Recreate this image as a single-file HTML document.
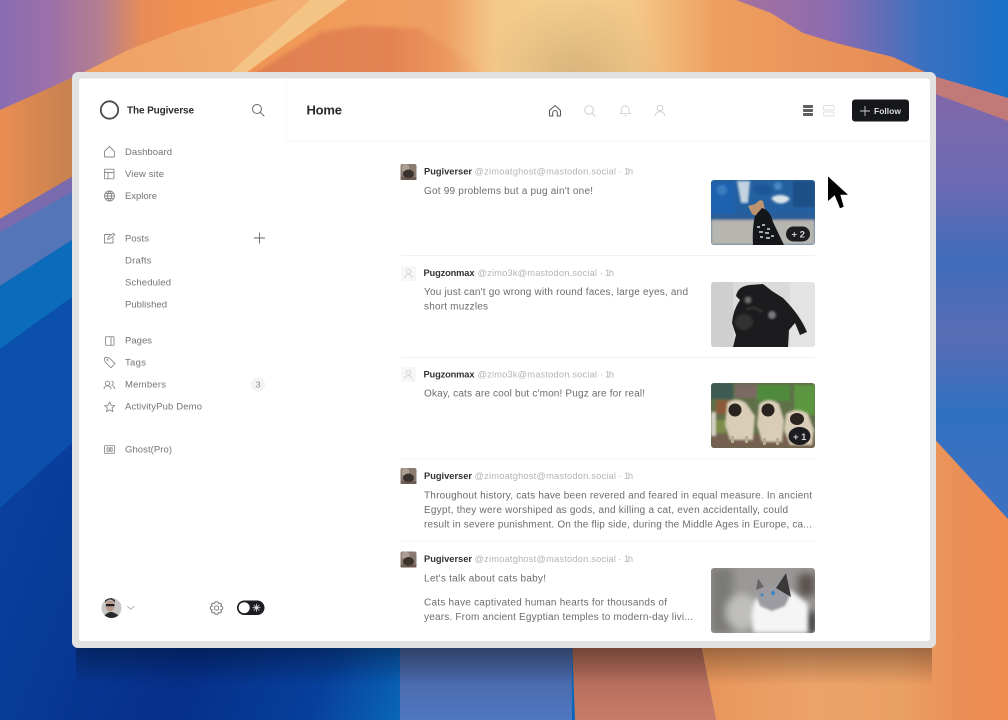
<!DOCTYPE html>
<html lang="en"><head><meta charset="utf-8"><title>The Pugiverse</title>
<style>
html,body{margin:0;padding:0;width:1008px;height:720px;overflow:hidden;background:#0a3a9a}
svg{display:block;overflow:hidden}
text{font-family:"Liberation Sans",sans-serif}
.s{font-size:9.5px;fill:#747474}
.n{font-size:9.3px;font-weight:700;fill:#303236}
.h{font-size:9.3px;fill:#b4b4b4}
.c{font-size:10px;fill:#6c6c6c}
.i{fill:none;stroke:#8a8a8a;stroke-width:.9;stroke-linecap:round;stroke-linejoin:round}
.d{stroke:#f1f1f1;stroke-width:1}
</style></head><body>
<svg width="1008" height="720" viewBox="0 0 1008 720" xmlns="http://www.w3.org/2000/svg">
<defs>
<linearGradient id="top" x1="0" x2="1008" y1="0" y2="0" gradientUnits="userSpaceOnUse">
<stop offset="0" stop-color="#8a6cb2"/><stop offset=".05" stop-color="#9c70a8"/><stop offset=".1" stop-color="#b57f90"/><stop offset=".14" stop-color="#e68c58"/><stop offset=".18" stop-color="#f09050"/><stop offset=".3" stop-color="#f09a58"/><stop offset=".44" stop-color="#ef9f64"/><stop offset=".49" stop-color="#f4c888"/><stop offset=".56" stop-color="#f5d08f"/><stop offset=".63" stop-color="#f4c888"/><stop offset=".71" stop-color="#ee9f5f"/><stop offset="1" stop-color="#e08050"/>
</linearGradient>
<linearGradient id="peach" x1="84" x2="320" y1="72" y2="0" gradientUnits="userSpaceOnUse"><stop offset="0" stop-color="#ef9f62"/><stop offset="1" stop-color="#f4b274"/></linearGradient>
<linearGradient id="deep" x1="247" x2="490" y1="0" y2="0" gradientUnits="userSpaceOnUse"><stop offset="0" stop-color="#dc7c50" stop-opacity=".9"/><stop offset=".6" stop-color="#e07e50" stop-opacity=".8"/><stop offset="1" stop-color="#ea8f55" stop-opacity="0"/></linearGradient>
<radialGradient id="midglow" cx="575" cy="80" r="90" gradientUnits="userSpaceOnUse"><stop offset="0" stop-color="#d2ad78" stop-opacity=".85"/><stop offset="1" stop-color="#d2ad78" stop-opacity="0"/></radialGradient>
<linearGradient id="rsky" x1="740" x2="1008" y1="0" y2="0" gradientUnits="userSpaceOnUse"><stop offset="0" stop-color="#a5709e"/><stop offset=".35" stop-color="#8c6cb0"/><stop offset=".68" stop-color="#3c70c0"/><stop offset="1" stop-color="#1870c8"/></linearGradient>
<linearGradient id="rmid" x1="0" x2="0" y1="90" y2="470" gradientUnits="userSpaceOnUse"><stop offset="0" stop-color="#8068a8"/><stop offset=".25" stop-color="#6c6ab4"/><stop offset=".45" stop-color="#3f6cba"/><stop offset=".65" stop-color="#5a6cb6"/><stop offset=".85" stop-color="#2f70c0"/><stop offset="1" stop-color="#3c70c0"/></linearGradient>
<linearGradient id="lor" x1="0" x2="72" y1="0" y2="0" gradientUnits="userSpaceOnUse"><stop offset="0" stop-color="#e98d52"/><stop offset="1" stop-color="#c6814f"/></linearGradient>
<linearGradient id="navy" x1="0" x2="400" y1="560" y2="720" gradientUnits="userSpaceOnUse"><stop offset="0" stop-color="#0a3f9e"/><stop offset=".5" stop-color="#052f88"/><stop offset=".8" stop-color="#073f9c"/><stop offset="1" stop-color="#0a66b8"/></linearGradient>
<linearGradient id="b1" x1="0" x2="0" y1="647" y2="720" gradientUnits="userSpaceOnUse"><stop offset="0" stop-color="#46609c"/><stop offset="1" stop-color="#4f78c2"/></linearGradient>
<linearGradient id="b2" x1="0" x2="0" y1="647" y2="720" gradientUnits="userSpaceOnUse"><stop offset="0" stop-color="#a86452"/><stop offset="1" stop-color="#c87a68"/></linearGradient>
<linearGradient id="or" x1="700" x2="1008" y1="0" y2="0" gradientUnits="userSpaceOnUse"><stop offset="0" stop-color="#e8955a"/><stop offset=".35" stop-color="#eda268"/><stop offset=".65" stop-color="#eba064"/><stop offset=".85" stop-color="#e98e55"/><stop offset="1" stop-color="#f08c52"/></linearGradient>
<linearGradient id="shade" x1="0" x2="0" y1="648" y2="685" gradientUnits="userSpaceOnUse"><stop offset="0" stop-color="#000" stop-opacity=".32"/><stop offset="1" stop-color="#000" stop-opacity="0"/></linearGradient>
<filter id="bl1" x="-20%" y="-20%" width="140%" height="140%"><feGaussianBlur stdDeviation="1"/></filter>
<filter id="bl2" x="-20%" y="-20%" width="140%" height="140%"><feGaussianBlur stdDeviation="2"/></filter>
<filter id="bl3" x="-30%" y="-30%" width="160%" height="160%"><feGaussianBlur stdDeviation="4"/></filter>
<clipPath id="p1"><rect x="711" y="180" width="104" height="65" rx="3"/></clipPath>
<clipPath id="p2"><rect x="711" y="282" width="104" height="65" rx="3"/></clipPath>
<clipPath id="p3"><rect x="711" y="383" width="104" height="65" rx="3"/></clipPath>
<clipPath id="p4"><rect x="711" y="568" width="104" height="65" rx="3"/></clipPath>
<clipPath id="me"><circle cx="111.5" cy="608" r="10"/></clipPath>
<clipPath id="tp"><rect width="1008" height="72"/></clipPath>
<g id="av"><rect width="16" height="16" rx="2" fill="#8a7a72"/><circle cx="5" cy="4" r="4" fill="#b5a79c" opacity=".8"/><ellipse cx="8" cy="10" rx="5.500" ry="4.500" fill="#3a322e"/><rect y="13" width="16" height="3" fill="#5a4640" opacity=".6"/></g>
<g id="ph"><rect width="15" height="15" rx="1" fill="#f7f7f7"/><circle cx="7.5" cy="5.5" r="2.3" fill="none" stroke="#d0d0d0" stroke-width=".8"/><path d="M3.6 12.2c.4-2.4 2-3.6 3.9-3.6s3.5 1.2 3.9 3.6" fill="none" stroke="#d0d0d0" stroke-width=".8"/></g>
</defs>

<!-- wallpaper -->
<rect width="1008" height="720" fill="url(#navy)"/>
<rect width="1008" height="110" fill="url(#top)"/>
<path d="M0 110L26 100 84 72 128 50 180 30 276 0H347L247 72 240 110H0Z" fill="url(#peach)"/>
<path d="M310 0H347L247 72H231Z" fill="#f4c485"/>
<g clip-path="url(#tp)"><path d="M250 76L321 32 360 26 420 28 490 76Z" fill="url(#deep)" filter="url(#bl2)"/></g>
<rect x="480" y="0" width="190" height="72" fill="url(#midglow)"/>
<path d="M736 0L771 13 803 33 836 43 893 57 936 77 1008 98V0Z" fill="url(#rsky)"/>
<!-- left bands -->
<path d="M0 110L72 78V177L0 219Z" fill="url(#lor)"/>
<path d="M0 219L72 177V240L0 286Z" fill="#5475b8"/>
<path d="M0 219L72 177V192L0 232Z" fill="#7a6bae"/>
<path d="M0 286L72 240V297L0 349Z" fill="#0b6cbc"/>
<path d="M0 349L72 297V443L0 508Z" fill="#0a50ac"/>
<!-- right bands -->
<path d="M930 75L1008 98V540H930Z" fill="url(#rmid)"/>
<path d="M930 75L1008 98V121L930 92Z" fill="#c27a78"/>
<!-- bottom bands -->
<rect x="400" y="640" width="172" height="80" fill="url(#b1)"/>
<path d="M572 640H700L716 720H575Z" fill="url(#b2)"/>
<path d="M700 640H930V434L1008 519V720H716Z" fill="url(#or)"/>
<rect x="76" y="648" width="856" height="37" fill="url(#shade)"/>

<g style="filter:blur(.35px)">
<!-- window -->
<rect x="72" y="72" width="864" height="576" rx="6" fill="#e2e2e2"/>
<rect x="79" y="78.5" width="851" height="562.5" rx="3" fill="#fff"/>
<path d="M286 79V141" stroke="#f8f8f8" fill="none"/>
<path d="M286 141H930" stroke="#f3f3f3" fill="none"/>

<!-- sidebar head -->
<circle cx="109.500" cy="110" r="8.700" fill="none" stroke="#4a4a4a" stroke-width="1.800"/>
<text x="127" y="113.700" textLength="67" lengthAdjust="spacing" style="font-size:10px;font-weight:700;fill:#2a2c2f">The Pugiverse</text>
<circle cx="257" cy="109" r="4.500" fill="none" stroke="#666" stroke-width="1"/><path d="M260.300 112.300L264 116" stroke="#666" stroke-width="1" stroke-linecap="round"/>

<!-- nav icons -->
<path class="i" d="M104.500 151.500L109.500 146.500 114.500 151.500V156.500A.6.6 0 0 1 114 157H105A.6.6 0 0 1 104.500 156.500Z"/>
<path class="i" d="M104.500 170A.8.8 0 0 1 105.300 169.200H113.200A.8.8 0 0 1 114 170V178A.8.8 0 0 1 113.200 178.800H105.300A.8.8 0 0 1 104.500 178ZM104.500 172.500H114M108 172.500V178.800"/>
<circle class="i" cx="109.500" cy="196" r="5"/><path class="i" d="M104.500 196H114.500M105.300 193.500H113.700M105.300 198.500H113.700M109.500 191C106.800 193.500 106.800 198.500 109.500 201C112.200 198.500 112.200 193.500 109.500 191Z"/>
<path class="i" d="M110 234.500H104.500V243H113V237.500M107.700 239.500L108.300 237 113.500 233.200 114.800 234.800 109.800 238.800Z"/>
<path d="M254 238H265M259.500 232.500V243.500" stroke="#666" stroke-width=".9" fill="none"/>
<path class="i" d="M105.500 337.500A.8.8 0 0 1 106.300 336.700H113.200A.8.8 0 0 1 114 337.500V344.500A.8.8 0 0 1 113.200 345.300H106.300A.8.8 0 0 1 105.500 344.500ZM111 336.700V345.300"/>
<path class="i" d="M104.500 358.500A1 1 0 0 1 105.500 357.500L109.200 357.800 115 363.500 111 367.800 105 361.800ZM107 360A.5.5 0 1 0 107 359.900"/>
<circle class="i" cx="107.500" cy="383.300" r="2.200"/><path class="i" d="M104 388.800C104.300 386.800 105.700 385.800 107.500 385.800S110.700 386.800 111 388.800M111.800 381.300A2.100 2.100 0 0 1 111.800 385.300M113 386.200C114 386.700 114.600 387.600 114.800 388.800"/>
<path class="i" d="M109.700 401.800L111.200 405.200 114.800 405.600 112.100 408 112.900 411.700 109.700 409.800 106.500 411.700 107.300 408 104.600 405.600 108.200 405.200Z"/>
<path class="i" d="M104.500 446.500A.8.8 0 0 1 105.300 445.700H113.800A.8.8 0 0 1 114.600 446.500V452.500A.8.8 0 0 1 113.800 453.300H105.300A.8.8 0 0 1 104.500 452.500ZM107 447.800H109.200V451.200H107ZM110.200 447.800H112.200V451.200H110.200Z"/>

<!-- nav labels -->
<text class="s" x="125" y="155" textLength="47" lengthAdjust="spacing">Dashboard</text>
<text class="s" x="125" y="177" textLength="39" lengthAdjust="spacing">View site</text>
<text class="s" x="125" y="199" textLength="32" lengthAdjust="spacing">Explore</text>
<text class="s" x="125" y="241.500" textLength="24" lengthAdjust="spacing">Posts</text>
<text class="s" x="125" y="263.500" textLength="26.500" lengthAdjust="spacing">Drafts</text>
<text class="s" x="125" y="285.500" textLength="46" lengthAdjust="spacing">Scheduled</text>
<text class="s" x="125" y="307.500" textLength="42" lengthAdjust="spacing">Published</text>
<text class="s" x="125" y="343.500" textLength="27" lengthAdjust="spacing">Pages</text>
<text class="s" x="125" y="365.500" textLength="21" lengthAdjust="spacing">Tags</text>
<text class="s" x="125" y="387.500" textLength="41" lengthAdjust="spacing">Members</text>
<text class="s" x="125" y="409.500" textLength="77" lengthAdjust="spacing">ActivityPub Demo</text>
<text class="s" x="125" y="452.500" textLength="47" lengthAdjust="spacing">Ghost(Pro)</text>
<circle cx="258" cy="384.500" r="7" fill="#f3f3f3"/><text x="255.800" y="387.500" style="font-size:8.500px;fill:#8a8a8a">3</text>

<!-- sidebar foot -->
<circle cx="111.500" cy="608" r="10" fill="#c9c7c5"/>
<g clip-path="url(#me)"><ellipse cx="110" cy="606" rx="4.500" ry="5.500" fill="#b89a8c"/><path d="M105 603Q110 596 115 603V600L110 597 105 600Z" fill="#403a38"/><rect x="106" y="604" width="8.500" height="2.200" fill="#1f1f1f"/><path d="M102 618Q108 611 112 612T122 618Z" fill="#2a2a2a"/></g>
<path class="i" d="M127.500 606.300L130.700 609.300 134 606.300" style="stroke:#aaa"/>
<g fill="none" stroke="#6e6e6e" stroke-width=".9" stroke-linejoin="round"><circle cx="216.500" cy="608" r="2.200"/><path d="M215.200 601.800H217.800L218.300 603.500 220 602.900 221.600 604.500 220.700 606.100 222.700 607V609L220.700 609.900 221.600 611.500 220 613.100 218.300 612.500 217.800 614.200H215.200L214.700 612.500 213 613.100 211.400 611.500 212.300 609.900 210.300 609V607L212.300 606.100 211.400 604.500 213 602.900 214.700 603.500Z"/></g>
<rect x="237" y="600.500" width="27.500" height="14.500" rx="7.250" fill="#1b1d20"/>
<circle cx="244.200" cy="607.700" r="5.500" fill="#fff"/>
<path d="M256.500 603.700V611.700M252.500 607.700H260.500M253.700 604.900L259.300 610.500M259.300 604.900L253.700 610.500" stroke="#ddd" stroke-width=".8"/><circle cx="256.500" cy="607.700" r="1.500" fill="#ddd"/>

<!-- header -->
<text x="306.500" y="114.500" textLength="35.500" lengthAdjust="spacing" style="font-size:13px;font-weight:700;fill:#2a2a2a">Home</text>
<path d="M549.500 110.500L555 105.500 560.500 110.500V115.200A.8.8 0 0 1 559.700 116H557.300V112.800A2.300 2.300 0 0 0 552.700 112.800V116H550.300A.8.8 0 0 1 549.500 115.200Z" fill="none" stroke="#555" stroke-width="1"/>
<circle cx="589" cy="110" r="4.300" fill="none" stroke="#cfcfcf" stroke-width="1"/><path d="M592.200 113.200L595.500 116.500" stroke="#cfcfcf"/>
<path d="M620.500 113.500C621.500 112.500 621.500 111.500 621.500 109.500A3.700 3.700 0 0 1 628.900 109.500C628.900 111.500 628.900 112.500 630 113.500ZM623.800 115.300Q625.200 116.800 626.700 115.300M625.200 105.800V104.800" fill="none" stroke="#d4d4d4" stroke-width="1"/>
<circle cx="660" cy="108" r="2.800" fill="none" stroke="#cfcfcf"/><path d="M655 116C655.500 113 657.500 111.600 660 111.600S664.500 113 665 116" fill="none" stroke="#cfcfcf"/>
<g fill="#606060"><rect x="803" y="105" width="10" height="3" rx=".7"/><rect x="803" y="109" width="10" height="3" rx=".7"/><rect x="803" y="113" width="10" height="3" rx=".7"/></g>
<g fill="none" stroke="#e2e2e2" stroke-width=".9"><rect x="823.500" y="105.500" width="10.500" height="4.500" rx=".8"/><rect x="823.500" y="112" width="10.500" height="4" rx=".8"/></g>
<rect x="852" y="99.500" width="57" height="22" rx="3" fill="#15171a"/>
<path d="M860 111H870M865 106V116" stroke="#ccc" stroke-width=".9"/>
<text x="874" y="114" textLength="27" lengthAdjust="spacing" style="font-size:8.500px;font-weight:700;fill:#dcdcdc">Follow</text>

<!-- feed -->
<use href="#av" x="400.500" y="164"/>
<text class="n" x="424" y="174.300" textLength="48" lengthAdjust="spacing">Pugiverser</text>
<text class="h" x="474.500" y="174.300" textLength="141.500" lengthAdjust="spacing">@zimoatghost@mastodon.social</text>
<text class="h" x="618" y="174.300">·</text><text class="h" x="624" y="174.300" textLength="9" lengthAdjust="spacing">1h</text>
<text class="c" x="424" y="194" textLength="169" lengthAdjust="spacing">Got 99 problems but a pug ain't one!</text>
<path class="d" d="M401 255.500H815"/>

<use href="#ph" x="401" y="266"/>
<text class="n" x="423.500" y="276" textLength="51" lengthAdjust="spacing">Pugzonmax</text>
<text class="h" x="477.500" y="276" textLength="119.500" lengthAdjust="spacing">@zimo3k@mastodon.social</text>
<text class="h" x="600" y="276">·</text><text class="h" x="605" y="276" textLength="9" lengthAdjust="spacing">1h</text>
<text class="c" x="424" y="295.200" textLength="264" lengthAdjust="spacing">You just can't go wrong with round faces, large eyes, and</text>
<text class="c" x="424" y="309.700" textLength="64" lengthAdjust="spacing">short muzzles</text>
<path class="d" d="M401 357.500H815"/>

<use href="#ph" x="401" y="367"/>
<text class="n" x="423.500" y="377.500" textLength="51" lengthAdjust="spacing">Pugzonmax</text>
<text class="h" x="477.500" y="377.500" textLength="119.500" lengthAdjust="spacing">@zimo3k@mastodon.social</text>
<text class="h" x="600" y="377.500">·</text><text class="h" x="605" y="377.500" textLength="9" lengthAdjust="spacing">1h</text>
<text class="c" x="424" y="396.700" textLength="221" lengthAdjust="spacing">Okay, cats are cool but c'mon! Pugz are for real!</text>
<path class="d" d="M401 459H815"/>

<use href="#av" x="400.500" y="468"/>
<text class="n" x="424" y="479" textLength="48" lengthAdjust="spacing">Pugiverser</text>
<text class="h" x="474.500" y="479" textLength="141.500" lengthAdjust="spacing">@zimoatghost@mastodon.social</text>
<text class="h" x="618" y="479">·</text><text class="h" x="624" y="479" textLength="9" lengthAdjust="spacing">1h</text>
<text class="c" x="424" y="498.300" textLength="388" lengthAdjust="spacing">Throughout history, cats have been revered and feared in equal measure. In ancient</text>
<text class="c" x="424" y="512.800" textLength="364" lengthAdjust="spacing">Egypt, they were worshiped as gods, and killing a cat, even accidentally, could</text>
<text class="c" x="424" y="527.300" textLength="388" lengthAdjust="spacing">result in severe punishment. On the flip side, during the Middle Ages in Europe, ca...</text>
<path class="d" d="M401 541H815"/>

<use href="#av" x="400.500" y="551.500"/>
<text class="n" x="424" y="562" textLength="48" lengthAdjust="spacing">Pugiverser</text>
<text class="h" x="474.500" y="562" textLength="141.500" lengthAdjust="spacing">@zimoatghost@mastodon.social</text>
<text class="h" x="618" y="562">·</text><text class="h" x="624" y="562" textLength="9" lengthAdjust="spacing">1h</text>
<text class="c" x="424" y="581.500" textLength="122" lengthAdjust="spacing">Let's talk about cats baby!</text>
<text class="c" x="424" y="605.700" textLength="243" lengthAdjust="spacing">Cats have captivated human hearts for thousands of</text>
<text class="c" x="424" y="620.200" textLength="269" lengthAdjust="spacing">years. From ancient Egyptian temples to modern-day livi...</text>

<!-- photo 1 -->
<g clip-path="url(#p1)">
<rect x="711" y="180" width="104" height="65" fill="#24609f"/>
<g filter="url(#bl1)">
<rect x="711" y="182" width="24" height="34" fill="#1f62ae"/>
<path d="M737 181H750L748 203H741Z" fill="#c2d2e0"/>
<path d="M771 198Q778 193 786 196T784 203Q776 205 771 198Z" fill="#dbe4ea"/>
<ellipse cx="763" cy="190" rx="9" ry="5" fill="#1b5498"/>
<circle cx="722" cy="190" r="5" fill="#3a7cc0"/>
<circle cx="778" cy="186" r="4" fill="#4a88c4"/>
<rect x="793" y="181" width="22" height="26" fill="#1b4f86"/>
<rect x="711" y="214" width="104" height="7" fill="#2a5f98"/>
<rect x="711" y="220" width="104" height="25" fill="#b6b5b0"/>
</g>
<path d="M748 206L755 204 760 200 763 201 765 210 760 218 752 214Z" fill="#bd9470"/>
<path d="M755 216L762 208Q770 210 773 222L784 245H753Q752 228 755 216Z" fill="#15161a"/>
<g fill="#c8d2d8" opacity=".8"><rect x="757" y="226" width="3" height="2"/><rect x="762" y="224" width="3" height="2"/><rect x="767" y="228" width="3" height="2"/><rect x="759" y="231" width="4" height="2"/><rect x="765" y="232" width="4" height="2"/><rect x="760" y="236" width="3" height="2"/><rect x="766" y="237" width="4" height="2"/><rect x="771" y="235" width="3" height="2"/></g>
<rect x="786" y="226.500" width="24" height="15" rx="7.500" fill="#1c1d20"/>
<text x="791.500" y="237.500" style="font-size:9.500px;font-weight:700;fill:#d0d0d0">+ 2</text>
</g>

<!-- photo 2 -->
<g clip-path="url(#p2)">
<rect x="711" y="282" width="104" height="65" fill="#dadada"/>
<rect x="711" y="282" width="22" height="65" fill="#cfcfcf"/>
<rect x="790" y="282" width="25" height="65" fill="#e3e3e3"/>
<path d="M736 296Q738 286 750 285L763 284 772 291 783 298Q800 315 807 332L800 335 795 323 789 330 788 347H733L736 335 732 323Q733 310 740 300Z" fill="#1c1c1e"/>
<g filter="url(#bl1)"><ellipse cx="744" cy="322" rx="9" ry="8" fill="#303032"/><circle cx="748" cy="300" r="3.500" fill="#6c6c6c"/><circle cx="772" cy="315" r="4" fill="#77797c"/><path d="M746 310Q754 305 762 312" stroke="#555" fill="none"/></g>
</g>

<!-- photo 3 -->
<g clip-path="url(#p3)">
<rect x="711" y="383" width="104" height="65" fill="#5f6f48"/>
<g filter="url(#bl1)">
<rect x="711" y="383" width="22" height="16" fill="#3e5a52"/>
<rect x="735" y="384" width="22" height="14" fill="#7a6a64"/>
<rect x="757" y="385" width="33" height="16" fill="#4f8a3c"/>
<rect x="794" y="385" width="21" height="30" fill="#5c9640"/>
<rect x="716" y="400" width="14" height="14" fill="#8a5a3a"/>
<rect x="711" y="434" width="104" height="14" fill="#75604f"/>
<rect x="712" y="420" width="14" height="13" fill="#7e8c48"/>
</g>
<g filter="url(#bl1)" fill="#d9cdb8">
<path d="M727 403Q736 396 746 403L755 416 753 440H730L725 425Z"/>
<path d="M759 404Q769 396 779 404L784 420 782 442H762L757 425Z"/>
<path d="M786 414Q797 406 808 414L814 430 812 445H790L784 430Z"/>
<rect x="711" y="412" width="5" height="24" fill="#d5d0c8"/>
</g>
<g fill="#2a2320"><ellipse cx="735" cy="410" rx="6.500" ry="6.500"/><ellipse cx="768" cy="410" rx="6.500" ry="6.500"/><ellipse cx="797" cy="419" rx="7" ry="6"/><rect x="731" y="436" width="3" height="7" fill="#b7aa92"/><rect x="745" y="436" width="3" height="7" fill="#b7aa92"/><rect x="763" y="438" width="3" height="7" fill="#b7aa92"/><rect x="776" y="438" width="3" height="7" fill="#b7aa92"/></g>
<ellipse cx="799.500" cy="436" rx="11" ry="9" fill="#1c1d20"/>
<text x="793" y="440" style="font-size:9.500px;font-weight:700;fill:#d0d0d0">+ 1</text>
</g>

<!-- photo 4 -->
<g clip-path="url(#p4)">
<rect x="711" y="568" width="104" height="65" fill="#9a9896"/>
<g filter="url(#bl3)">
<rect x="711" y="568" width="22" height="65" fill="#7c7a78"/>
<ellipse cx="742" cy="612" rx="16" ry="18" fill="#c0bfbd"/>
<rect x="798" y="574" width="17" height="22" fill="#5c5350"/>
<rect x="806" y="612" width="9" height="21" fill="#2e2e2e"/>
</g>
<path d="M755 600Q768 588 790 590L808 604 808 633H754Q749 615 755 600Z" fill="#f5f5f5" filter="url(#bl2)"/>
<path d="M755 592L758 578 764 586 776 586 786 573 790 595 785 606 772 611 760 606Z" fill="#9c9ba2" filter="url(#bl1)"/>
<path d="M776 588L786 573 791 597Z" fill="#3b3838"/>
<path d="M756 590L758 578 764 587Z" fill="#6c6464"/>
<circle cx="773" cy="593" r="2" fill="#3c86c8"/><circle cx="762" cy="595" r="1.500" fill="#3c86c8"/>
</g>

<!-- cursor -->
<path d="M828 176.500V201L834.700 195.300 840 208.200 843.700 206.700 840.300 194.800H848Z" fill="#000" stroke="#fff" stroke-width="1.800" stroke-linejoin="round" paint-order="stroke"/>
</g>
</svg>
</body></html>
